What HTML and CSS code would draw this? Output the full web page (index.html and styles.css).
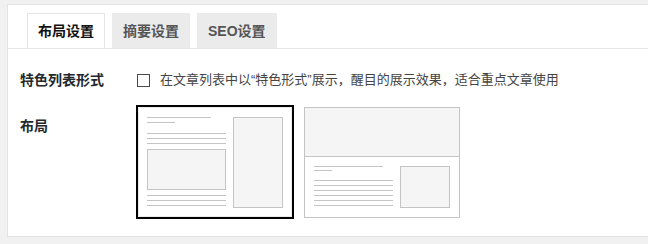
FILE: index.html
```html
<!DOCTYPE html>
<html lang="zh-CN">
<head>
<meta charset="utf-8">
<title>布局设置</title>
<link rel="stylesheet" href="styles.css">
</head>
<body>
<div class="panel">
  <div class="tabs">
    <div class="tab active">布局设置</div>
    <div class="tab">摘要设置</div>
    <div class="tab">SEO设置</div>
  </div>
  <div class="form">
    <div class="row row-check">
      <div class="label">特色列表形式</div>
      <div class="field">
        <span class="checkbox"></span>
        <span class="desc">在文章列表中以“特色形式”展示，醒目的展示效果，适合重点文章使用</span>
      </div>
    </div>
    <div class="row row-layout">
      <div class="label label-layout">布局</div>
      <div class="field layouts">
        <div class="opt selected">
          <svg width="154" height="110" viewBox="0 0 154 110">
            <rect x="0.5" y="0.5" width="153" height="109" fill="#fff" stroke="#ececec"/>
            <g stroke="#c4c4c4" stroke-width="1">
              <line x1="9" y1="10.5" x2="73" y2="10.5"/>
              <line x1="9" y1="15.5" x2="37" y2="15.5"/>
              <line x1="9" y1="26.5" x2="88" y2="26.5"/>
              <line x1="9" y1="31.5" x2="88" y2="31.5"/>
              <line x1="9" y1="36.5" x2="88" y2="36.5"/>
              <rect x="9.5" y="42.5" width="78" height="40" fill="#f5f5f5"/>
              <line x1="9" y1="88.5" x2="88" y2="88.5"/>
              <line x1="9" y1="93.5" x2="88" y2="93.5"/>
              <line x1="9" y1="98.5" x2="88" y2="98.5"/>
              <rect x="95.5" y="10.5" width="49" height="90" fill="#f5f5f5"/>
            </g>
          </svg>
        </div>
        <div class="opt">
          <svg width="156" height="111" viewBox="0 0 156 111">
            <rect x="0.5" y="0.5" width="155" height="110" fill="#fff" stroke="#c4c4c4"/>
            <rect x="1" y="1" width="154" height="48.5" fill="#f5f5f5"/>
            <g stroke="#c4c4c4" stroke-width="1">
              <line x1="0.5" y1="49.5" x2="155.5" y2="49.5"/>
              <line x1="10" y1="59.5" x2="79" y2="59.5"/>
              <line x1="10" y1="63.5" x2="28" y2="63.5"/>
              <line x1="10" y1="73.5" x2="89" y2="73.5"/>
              <line x1="10" y1="78.5" x2="89" y2="78.5"/>
              <line x1="10" y1="83.5" x2="89" y2="83.5"/>
              <line x1="10" y1="88.5" x2="89" y2="88.5"/>
              <line x1="10" y1="93.5" x2="89" y2="93.5"/>
              <line x1="10" y1="98.5" x2="89" y2="98.5"/>
              <rect x="96.5" y="59.5" width="49" height="41" fill="#f5f5f5"/>
            </g>
          </svg>
        </div>
      </div>
    </div>
  </div>
</div>
</body>
</html>
```

FILE: styles.css
```css
html, body {
  margin: 0;
  padding: 0;
  background: #f1f1f1;
  overflow: hidden;
  font-family: "Liberation Sans", "Noto Sans CJK SC", sans-serif;
}

.panel {
  margin: 4px 0 0 7px;
  height: 233px;
  box-sizing: border-box;
  background: #fff;
  border: 1px solid #e3e3e3;
  border-right: none;
}

.tabs {
  display: flex;
  gap: 7px;
  padding: 8px 0 0 19px;
  border-bottom: 1px solid #e5e5e5;
}

.tab {
  box-sizing: border-box;
  height: 35px;
  padding: 1px 10px 0;
  line-height: 32px;
  font-size: 14px;
  font-weight: bold;
  color: #555;
  background: #ebebeb;
  border: 1px solid #ebebeb;
  border-bottom: none;
}

.tab.active {
  background: #fff;
  color: #111;
  border-color: #e5e5e5;
}

.form {
  padding: 21px 0 0 12px;
}

.row {
  display: flex;
}

.label {
  width: 116px;
  flex: none;
  font-size: 14px;
  font-weight: bold;
  color: #23282d;
  line-height: 20px;
}

.row-check .field {
  display: flex;
  align-items: center;
  height: 20px;
}

.checkbox {
  box-sizing: border-box;
  width: 13px;
  height: 13px;
  border: 1px solid #4a4a4a;
  margin-left: 1px;
  margin-right: 10px;
  flex: none;
}

.desc {
  font-size: 13px;
  color: #444;
  line-height: 20px;
}

.row-layout {
  margin-top: 15px;
}

.label-layout {
  padding-top: 11px;
}

.layouts {
  display: flex;
  align-items: flex-start;
  gap: 8px;
}

.opt {
  border: 2px solid transparent;
  line-height: 0;
}

.opt svg {
  display: block;
}

.opt.selected {
  border-color: #000;
}
```
